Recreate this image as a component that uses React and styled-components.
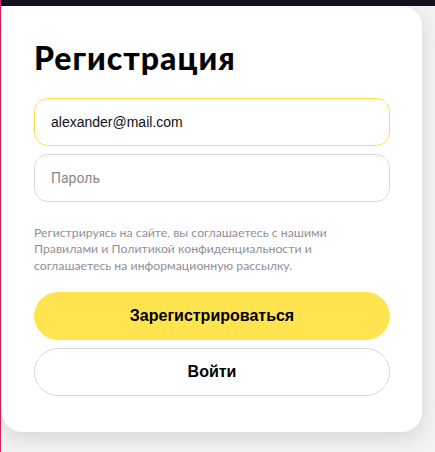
import React, { useState } from "react";
import styled, { createGlobalStyle } from "styled-components";

const GlobalStyle = createGlobalStyle`
  * { box-sizing: border-box; }
  body {
    margin: 0;
    background: #f3f3f4;
    font-family: "Liberation Sans", Arial, sans-serif;
  }
`;

const Page = styled.div`
  min-height: 452px;
  border-left: 1px solid #d6285a;
  display: flex;
  flex-direction: column;
`;

const TopBar = styled.div`
  height: 6px;
  background: #15121b;
`;

const Card = styled.form`
  width: 420px;
  margin-left: 1px;
  background: #fff;
  border-radius: 4px 20px 20px 20px;
  box-shadow: 0 6px 22px rgba(0, 0, 0, 0.13);
  padding: 32px 32px 36px;
  display: flex;
  flex-direction: column;
`;

const Title = styled.h1`
  margin: 0 0 20px;
  font-family: Lato, "Noto Sans", sans-serif;
  font-weight: 900;
  font-size: 32px;
  letter-spacing: 1px;
  line-height: 40px;
  color: #000;
`;

const Fields = styled.div`
  display: flex;
  flex-direction: column;
  gap: 8px;
`;

const Input = styled.input`
  height: 48px;
  width: 100%;
  border: 1px solid ${(p) => (p.$active ? "#ffe04a" : "#d3d9e0")};
  border-radius: 14px;
  padding: 0 16px;
  font-family: "Liberation Sans", Arial, sans-serif;
  font-size: 14px;
  color: #111;
  background: #fff;
  outline: none;
  &::placeholder {
    color: #8a8686;
    font-family: Roboto, sans-serif;
  }
`;

const Note = styled.p`
  margin: 23px 0 18px;
  font-family: Lato, "Noto Sans", sans-serif;
  font-size: 12.3px;
  line-height: 16.3px;
  color: #8f8f98;
`;

const Buttons = styled.div`
  display: flex;
  flex-direction: column;
  gap: 8px;
`;

const Button = styled.button`
  height: 48px;
  width: 100%;
  border-radius: 24px;
  border: 1px solid ${(p) => (p.$primary ? "#ffe44f" : "#d3d9e0")};
  background: ${(p) => (p.$primary ? "#ffe44f" : "#fff")};
  font-family: "Liberation Sans", Arial, sans-serif;
  font-weight: 700;
  font-size: 16px;
  color: #000;
  cursor: pointer;
`;

const App = () => {
  const [email, setEmail] = useState("alexander@mail.com");
  const [password, setPassword] = useState("");

  return (
    <>
      <GlobalStyle />
      <Page>
        <TopBar />
        <Card onSubmit={(e) => e.preventDefault()}>
          <Title>Регистрация</Title>
          <Fields>
            <Input
              $active
              type="email"
              value={email}
              onChange={(e) => setEmail(e.target.value)}
            />
            <Input
              type="password"
              placeholder="Пароль"
              value={password}
              onChange={(e) => setPassword(e.target.value)}
            />
          </Fields>
          <Note>
            Регистрируясь на сайте, вы соглашаетесь с нашими
            <br />
            Правилами и Политикой конфиденциальности и
            <br />
            соглашаетесь на информационную рассылку.
          </Note>
          <Buttons>
            <Button $primary type="submit">
              Зарегистрироваться
            </Button>
            <Button type="button">Войти</Button>
          </Buttons>
        </Card>
      </Page>
    </>
  );
};

export default App;
